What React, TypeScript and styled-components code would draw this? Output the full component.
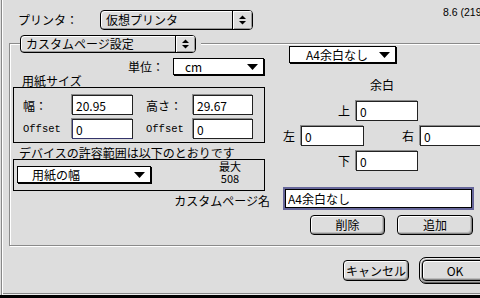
import React from "react";
import styled, { createGlobalStyle } from "styled-components";

const GlobalStyle = createGlobalStyle`
  html, body { margin: 0; padding: 0; background: #dddddd; overflow: hidden; }
  body { font-family: "Noto Sans CJK JP", "Noto Sans", sans-serif; font-size: 12px; color: #000; }
  * { box-sizing: border-box; }
`;

const Window = styled.div`
  width: 500px;
  height: 298px;
  background: #dddddd;
  border-bottom: 3px solid #000;
  box-shadow: inset 1px 0 0 #dddddd, inset 2px 0 0 #888, inset 3px 0 0 #fff,
    inset 0 -1px 0 #eeeeee, inset 0 -2px 0 #888;
  overflow: hidden;
`;

const TopRow = styled.div`
  display: flex;
  align-items: flex-start;
  height: 43px;
`;

const TopLabel = styled.div`
  margin: 14px 0 0 18px;
  width: 82px;
  line-height: 12px;
  white-space: nowrap;
`;

const Version = styled.div`
  margin: 6px 0 0 190px;
  font-family: "Liberation Sans", sans-serif;
  font-size: 10.5px;
  line-height: 12px;
  white-space: nowrap;
`;

/* Platinum pop-up menu (rounded, grey, with up/down arrows) */
const PlatPopup = styled.div<{ $w: number; $h: number; $mt?: number }>`
  display: flex;
  width: ${(p) => p.$w}px;
  height: ${(p) => p.$h}px;
  margin-top: ${(p) => p.$mt ?? 0}px;
  border: 1px solid #000;
  border-radius: 4px;
  background: #dddddd;
  box-shadow: inset 1px 1px 0 #fff, inset -1px -1px 0 #999;
  overflow: hidden;
`;

const PlatText = styled.div<{ $h: number }>`
  flex: 1;
  padding-left: 5px;
  line-height: ${(p) => p.$h - 2}px;
  white-space: nowrap;
`;

const PlatArrows = styled.div`
  width: 20px;
  border-left: 1px solid #000;
  display: flex;
  align-items: center;
  justify-content: center;
  background: #dddddd;
  box-shadow: inset 1px 1px 0 #fff, inset -1px -1px 0 #999;
`;

const UpDown = () => (
  <svg width="7" height="10" viewBox="0 0 7 10">
    <polygon points="0,4 3.5,0.5 7,4" fill="#000" />
    <polygon points="0,6 7,6 3.5,9.5" fill="#000" />
  </svg>
);

/* Classic pop-up (white box, drop shadow, down triangle) */
const ClassicPopup = styled.div<{ $w: number; $pl: number; $mt?: number; $ml?: number }>`
  display: flex;
  align-items: center;
  width: ${(p) => p.$w}px;
  height: 17px;
  margin-top: ${(p) => p.$mt ?? 0}px;
  margin-left: ${(p) => p.$ml ?? 0}px;
  padding: 0 5px 0 ${(p) => p.$pl}px;
  border: 1px solid #000;
  background: #fff;
  box-shadow: 1px 1px 0 #000;
  line-height: 15px;
  white-space: nowrap;
`;

const PopupText = styled.span`
  flex: 1;
`;

const DownTri = () => (
  <svg width="11" height="6" viewBox="0 0 11 6">
    <polygon points="0,0 11,0 5.5,6" fill="#000" />
  </svg>
);

const Group = styled.div`
  position: relative;
  height: 203px;
  width: 520px;
  margin-left: 9px;
  border: 1px solid #8a8a8a;
  box-shadow: inset 1px 1px 0 #fff, 1px 1px 0 #fff;
`;

const Legend = styled.div`
  position: absolute;
  top: -9px;
  left: 10px;
  padding-right: 5px;
  background: #dddddd;
`;

const GroupBody = styled.div`
  display: flex;
  padding-left: 3px;
  gap: 18px;
`;

const LeftColumn = styled.div`
  width: 252px;
  display: flex;
  flex-direction: column;
`;

const UnitRow = styled.div`
  margin-top: 14px;
  display: flex;
  justify-content: flex-end;
  align-items: center;
  gap: 9px;
  padding-right: 1px;
`;

const Caption = styled.div<{ $mt?: number; $pl?: number }>`
  margin-top: ${(p) => p.$mt ?? 0}px;
  padding-left: ${(p) => p.$pl ?? 0}px;
  line-height: 12px;
  white-space: nowrap;
`;

const SizeBox = styled.div`
  height: 56px;
  border: 1px solid #000;
  padding: 7px 0 0 9px;
  display: grid;
  grid-template-columns: 49px 61px 60px 60px;
  grid-template-rows: 20px 20px;
  row-gap: 4px;
  align-items: center;
`;

const FieldLabel = styled.div<{ $mono?: boolean; $pl?: number }>`
  padding-left: ${(p) => p.$pl ?? 0}px;
  font-family: ${(p) =>
    p.$mono ? '"Liberation Mono", "DejaVu Sans Mono", monospace' : "inherit"};
  font-size: ${(p) => (p.$mono ? "10.5px" : "12px")};
  white-space: nowrap;
`;

const Field = styled.input<{ $w: number; $h?: number; $focus?: boolean }>`
  width: ${(p) => p.$w}px;
  height: ${(p) => p.$h ?? 20}px;
  padding: 0 3px;
  margin: 0;
  font-family: "Noto Sans CJK JP", sans-serif;
  font-size: 12px;
  color: #000;
  background: #fff;
  border: 1px solid #222;
  border-left-color: ${(p) => (p.$focus ? "#33336a" : "#222")};
  border-bottom-color: ${(p) => (p.$focus ? "#33336a" : "#222")};
  box-shadow: -1px -1px 0 #8a8a8a;
  outline: none;
`;

const RangeBox = styled.div`
  height: 32px;
  border: 1px solid #000;
  padding-left: 3px;
  display: flex;
  align-items: flex-start;
`;

const Stat = styled.div`
  margin-left: 63px;
  width: 32px;
  display: flex;
  flex-direction: column;
  align-items: center;
`;

const StatLine = styled.div`
  height: 12px;
  font-size: 11px;
  line-height: 12px;
`;

const NameLabel = styled.div`
  margin-top: 4px;
  margin-right: -5px;
  align-self: flex-end;
  line-height: 12px;
  white-space: nowrap;
`;

const RightColumn = styled.div`
  display: flex;
  flex-direction: column;
`;

const MarginRow = styled.div<{ $mt: number; $pl: number }>`
  display: flex;
  align-items: center;
  gap: 38px;
  margin-top: ${(p) => p.$mt}px;
  padding-left: ${(p) => p.$pl}px;
`;

const MarginItem = styled.div`
  display: flex;
  align-items: center;
`;

const MarginLabel = styled.span`
  width: 18px;
  line-height: 12px;
`;

const NameField = styled.input`
  width: 187px;
  height: 19px;
  margin: 18px 0 0 2px;
  padding: 0 2px;
  font-family: "Noto Sans CJK JP", sans-serif;
  font-size: 12px;
  color: #000;
  background: #fff;
  border: 1px solid #000;
  box-shadow: 0 0 0 2px #66669a;
  outline: none;
`;

const ButtonRow = styled.div`
  display: flex;
  gap: 12px;
  margin-top: 7px;
  padding-left: 27px;
`;

const Button = styled.button<{ $w: number; $h?: number }>`
  width: ${(p) => p.$w}px;
  height: ${(p) => p.$h ?? 20}px;
  padding: 0;
  margin: 0;
  font-family: "Noto Sans CJK JP", sans-serif;
  font-size: 12px;
  color: #000;
  line-height: ${(p) => (p.$h ?? 20) - 2}px;
  text-align: center;
  border: 1px solid #000;
  border-radius: 4px;
  background: #dddddd;
  box-shadow: inset 1px 1px 0 #fff, inset -1px -1px 0 #888, inset -2px -2px 0 #bbb;
`;

const Footer = styled.div`
  display: flex;
  align-items: center;
  gap: 10px;
  margin-top: 11px;
  padding-left: 343px;
`;

const DefaultRing = styled.div`
  padding: 2px;
  border: 1px solid #000;
  border-radius: 7px;
  background: #a8a8a8;
  box-shadow: inset 1px 1px 0 #eee, inset -1px -1px 0 #666;
  display: flex;
`;

export default function App() {
  return (
    <>
      <GlobalStyle />
      <Window>
        <TopRow>
          <TopLabel>プリンタ：</TopLabel>
          <PlatPopup $w={153} $h={20} $mt={10}>
            <PlatText $h={20}>仮想プリンタ</PlatText>
            <PlatArrows>
              <UpDown />
            </PlatArrows>
          </PlatPopup>
          <Version>8.6 (2191)</Version>
        </TopRow>

        <Group>
          <Legend>
            <PlatPopup $w={176} $h={18}>
              <PlatText $h={18}>カスタムページ設定</PlatText>
              <PlatArrows>
                <UpDown />
              </PlatArrows>
            </PlatPopup>
          </Legend>

          <GroupBody>
            <LeftColumn>
              <UnitRow>
                <Caption>単位：</Caption>
                <ClassicPopup $w={91} $pl={11}>
                  <PopupText>cm</PopupText>
                  <DownTri />
                </ClassicPopup>
              </UnitRow>

              <Caption $pl={9}>用紙サイズ</Caption>
              <SizeBox>
                <FieldLabel>幅：</FieldLabel>
                <Field $w={61} readOnly value="20.95" />
                <FieldLabel $pl={13}>高さ：</FieldLabel>
                <Field $w={60} readOnly value="29.67" />
                <FieldLabel $mono>Offset</FieldLabel>
                <Field $w={61} $focus readOnly value="0" />
                <FieldLabel $mono $pl={13}>
                  Offset
                </FieldLabel>
                <Field $w={60} readOnly value="0" />
              </SizeBox>

              <Caption $mt={4} $pl={6}>
                デバイスの許容範囲は以下のとおりです
              </Caption>
              <RangeBox>
                <ClassicPopup $w={134} $pl={14} $mt={6}>
                  <PopupText>用紙の幅</PopupText>
                  <DownTri />
                </ClassicPopup>
                <Stat>
                  <StatLine>最大</StatLine>
                  <StatLine>508</StatLine>
                </Stat>
              </RangeBox>

              <NameLabel>カスタムページ名</NameLabel>
            </LeftColumn>

            <RightColumn>
              <ClassicPopup $w={107} $pl={16} $mt={2} $ml={6}>
                <PopupText>A4余白なし</PopupText>
                <DownTri />
              </ClassicPopup>

              <Caption $mt={16} $pl={87}>
                余白
              </Caption>

              <MarginRow $mt={10} $pl={55}>
                <MarginItem>
                  <MarginLabel>上</MarginLabel>
                  <Field $w={62} readOnly value="0" />
                </MarginItem>
              </MarginRow>
              <MarginRow $mt={5} $pl={0}>
                <MarginItem>
                  <MarginLabel>左</MarginLabel>
                  <Field $w={63} readOnly value="0" />
                </MarginItem>
                <MarginItem>
                  <MarginLabel>右</MarginLabel>
                  <Field $w={63} readOnly value="0" />
                </MarginItem>
              </MarginRow>
              <MarginRow $mt={5} $pl={55}>
                <MarginItem>
                  <MarginLabel>下</MarginLabel>
                  <Field $w={62} readOnly value="0" />
                </MarginItem>
              </MarginRow>

              <NameField readOnly value="A4余白なし" />

              <ButtonRow>
                <Button $w={75}>削除</Button>
                <Button $w={76}>追加</Button>
              </ButtonRow>
            </RightColumn>
          </GroupBody>
        </Group>

        <Footer>
          <Button $w={66} $h={21}>
            キャンセル
          </Button>
          <DefaultRing>
            <Button $w={66} $h={21}>
              OK
            </Button>
          </DefaultRing>
        </Footer>
      </Window>
    </>
  );
}
